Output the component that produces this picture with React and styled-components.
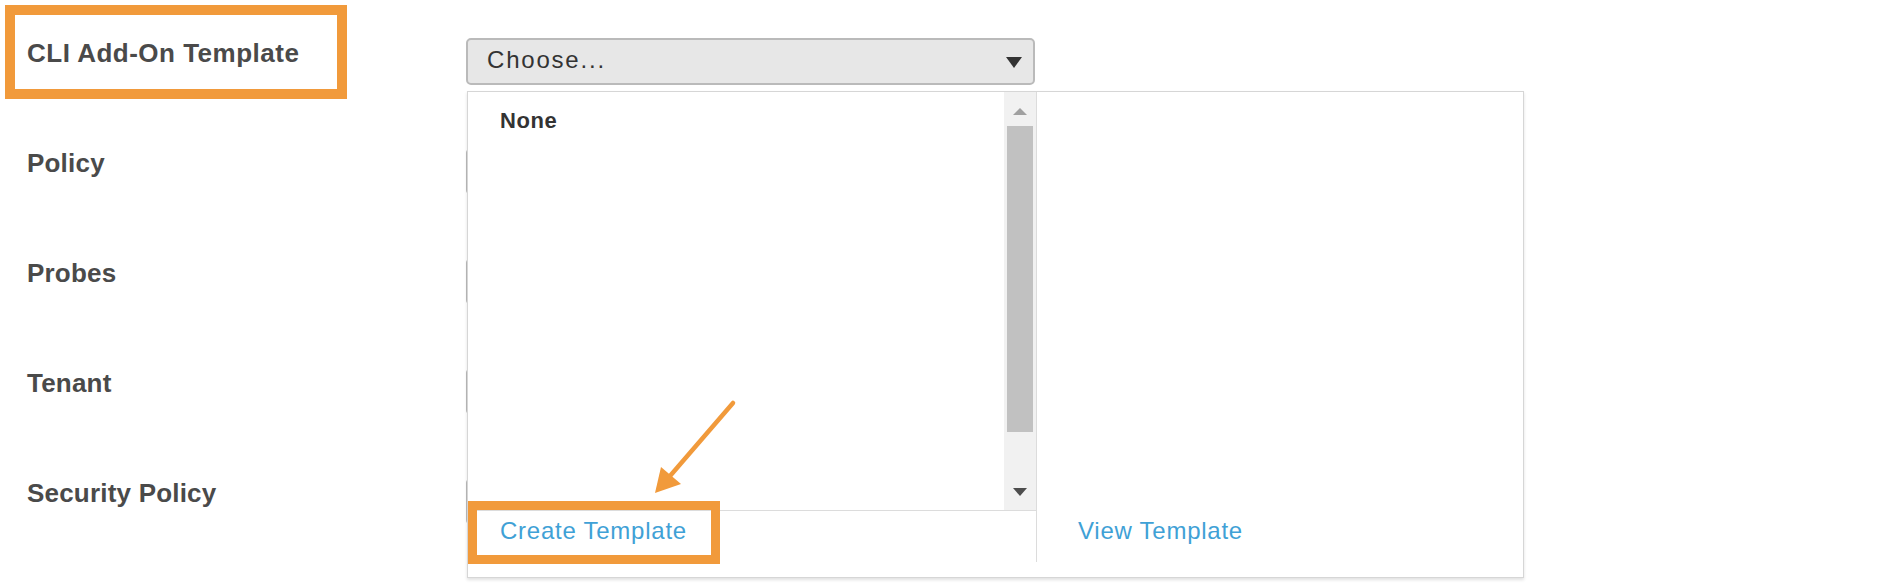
import React from 'react';
import styled, { createGlobalStyle } from 'styled-components';

const GlobalStyle = createGlobalStyle`
  body {
    margin: 0;
    background: #ffffff;
    font-family: "Liberation Sans", Arial, sans-serif;
  }
`;

const orange = '#f19a3b';
const blue = '#3fa1d6';

const Form = styled.div`
  width: 1882px;
  height: 586px;
  overflow: hidden;
  position: relative;
`;

const Row = styled.div`
  position: relative;
  display: grid;
  grid-template-columns: 466px 569px;
  height: 110px;
  padding-top: 38px;
  box-sizing: border-box;
`;

const Label = styled.div`
  position: relative;
  padding-left: 27px;
  font-size: 26px;
  line-height: 30px;
  font-weight: 700;
  letter-spacing: ${(p) => (p.$wide ? 0.5 : 0.2)}px;
  color: #4a4a4a;
`;

const Highlight = styled.div`
  position: absolute;
  box-sizing: border-box;
  border: ${(p) => p.$w || 10}px solid ${orange};
  pointer-events: none;
`;

const SelectWrap = styled.div`
  position: relative;
`;

const SelectBox = styled.div`
  height: 47px;
  box-sizing: border-box;
  border: 2px solid #bababa;
  border-radius: 5px;
  background: #e7e7e7;
  display: flex;
  justify-content: space-between;
  align-items: flex-start;
  padding: 0 11px 0 19px;
  font-size: 24px;
  line-height: 40px;
  letter-spacing: 1.8px;
  color: #333333;
`;

const Caret = styled.svg`
  align-self: center;
  margin-top: 2px;
`;

const Menu = styled.div`
  position: absolute;
  z-index: 5;
  top: 53px;
  left: 1px;
  width: 1057px;
  height: 487px;
  box-sizing: border-box;
  border: 1px solid #d6d6d6;
  background: #ffffff;
  box-shadow: 0 2px 3px rgba(0, 0, 0, 0.12);
  display: flex;
  padding-bottom: 15px;
`;

const ListCol = styled.div`
  position: relative;
  width: 569px;
  box-sizing: border-box;
  border-right: 1px solid #dcdcdc;
  display: flex;
  flex-direction: column;
`;

const ListArea = styled.div`
  height: 418px;
  display: flex;
`;

const Items = styled.div`
  flex: 1;
  padding: 16px 0 0 32px;
`;

const Item = styled.div`
  font-size: 22px;
  line-height: 26px;
  font-weight: 700;
  letter-spacing: 0.6px;
  color: #333333;
`;

const Scrollbar = styled.div`
  width: 32px;
  background: #f1f1f1;
  display: flex;
  flex-direction: column;
  align-items: center;
  padding: 16px 0 14px;
  box-sizing: border-box;
`;

const Thumb = styled.div`
  width: 26px;
  height: 306px;
  margin-top: 11px;
  background: #c1c1c1;
`;

const DownArrow = styled.svg`
  margin-top: auto;
`;

const Footer = styled.div`
  position: relative;
  height: 52px;
  box-sizing: border-box;
  padding-top: ${(p) => (p.$line ? 6 : 7)}px;
  padding-left: ${(p) => (p.$line ? 32 : 0)}px;
  border-top: ${(p) => (p.$line ? '1px solid #dcdcdc' : 'none')};
`;

const LinkText = styled.span`
  font-size: 24px;
  line-height: 28px;
  letter-spacing: 0.75px;
  color: ${blue};
`;

const RightCol = styled.div`
  flex: 1;
  display: flex;
  flex-direction: column;
  justify-content: flex-end;
  padding-left: 41px;
`;

const Pointer = styled.svg`
  position: absolute;
  left: 180px;
  top: 305px;
  overflow: visible;
`;

const labels = ['Policy', 'Probes', 'Tenant', 'Security Policy'];

function Select() {
  return (
    <SelectBox>
      <span>Choose...</span>
      <Caret width="16" height="11" viewBox="0 0 16 11">
        <polygon points="0,0 16,0 8,11" fill="#333" />
      </Caret>
    </SelectBox>
  );
}

export default function App() {
  return (
    <>
      <GlobalStyle />
      <Form>
        <Row>
          <Label $wide>
            CLI Add-On Template
            <Highlight style={{ left: 5, top: -33, width: 342, height: 94 }} />
          </Label>
          <SelectWrap>
            <Select />
            <Menu>
              <ListCol>
                <ListArea>
                  <Items>
                    <Item>None</Item>
                  </Items>
                  <Scrollbar>
                    <svg width="14" height="7" viewBox="0 0 14 7">
                      <polygon points="0,7 14,7 7,0" fill="#a0a0a0" />
                    </svg>
                    <Thumb />
                    <DownArrow width="14" height="8" viewBox="0 0 14 8">
                      <polygon points="0,0 14,0 7,8" fill="#4d4d4d" />
                    </DownArrow>
                  </Scrollbar>
                </ListArea>
                <Footer $line>
                  <LinkText>Create Template</LinkText>
                  <Highlight $w={9} style={{ left: 0, top: -10, width: 252, height: 63 }} />
                </Footer>
                <Pointer width="95" height="100" viewBox="0 0 95 100">
                  <line x1="85" y1="6" x2="22" y2="79" stroke={orange} strokeWidth="4.5" strokeLinecap="round" />
                  <polygon points="7,96 13,70 33,87" fill={orange} />
                </Pointer>
              </ListCol>
              <RightCol>
                <Footer>
                  <LinkText>View Template</LinkText>
                </Footer>
              </RightCol>
            </Menu>
          </SelectWrap>
        </Row>
        {labels.map((l) => (
          <Row key={l}>
            <Label>{l}</Label>
            <SelectWrap>
              <Select />
            </SelectWrap>
          </Row>
        ))}
      </Form>
    </>
  );
}
